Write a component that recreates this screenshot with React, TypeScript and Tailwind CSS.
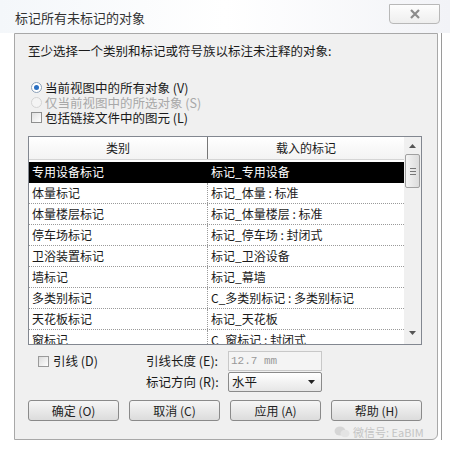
import React from 'react';

const rows: [string, string][] = [
  ['专用设备标记', '标记_专用设备'],
  ['体量标记', '标记_体量 : 标准'],
  ['体量楼层标记', '标记_体量楼层 : 标准'],
  ['停车场标记', '标记_停车场 : 封闭式'],
  ['卫浴装置标记', '标记_卫浴设备'],
  ['墙标记', '标记_幕墙'],
  ['多类别标记', 'C_多类别标记 : 多类别标记'],
  ['天花板标记', '标记_天花板'],
  ['窗标记', 'C_窗标记 : 封闭式'],
];

const font = { fontFamily: '"Noto Sans CJK SC", "Noto Sans", sans-serif' };

const Button = ({ label }: { label: string }) => (
  <button className="h-[21px] w-[91px] rounded-[3px] border border-[#8a8a8a] bg-gradient-to-b from-[#f6f6f6] to-[#dcdcdc] text-[12px] leading-none text-[#222]">
    {label}
  </button>
);

export default function App() {
  return (
    <div className="relative h-[451px] w-[450px] overflow-hidden bg-white text-[#1a1a1a]" style={font}>
      {/* 标题栏 */}
      <div className="flex h-[33px] bg-gradient-to-r from-[#f4f7fa] via-[#ffffff] to-[#f2f3f7]">
        <div className="flex-1 pl-[15px] pt-[10px] text-[13px] leading-[16px] text-[#333]">标记所有未标记的对象</div>
        <div className="mr-[10px] mt-[4px] flex h-[20px] w-[51px] items-center justify-center rounded-b-[4px] border border-[#b8b8b8] bg-gradient-to-b from-[#fdfdfd] to-[#eeeeee]">
          <svg width="12" height="10" viewBox="0 0 12 10">
            <path d="M2 1 L10 9 M10 1 L2 9" stroke="#8c8c8c" strokeWidth="2.2" fill="none" />
          </svg>
        </div>
      </div>

      <div className="flex">
        <div className="ml-[14px] h-[407px] w-[424px] rounded-br-[6px] border border-[#a8a8a8] bg-[#f0f0f0] pl-[13px] pr-[15px]">
          <div className="pt-[8px] text-[12.5px] leading-[17px]">至少选择一个类别和标记或符号族以标注未注释的对象:</div>

          {/* 选项 */}
          <div className="mt-[21px] flex flex-col pl-[3px] text-[12.5px] leading-[15px]">
            <div className="flex h-[15px] items-center gap-[3px]">
              <span className="flex h-[11px] w-[11px] items-center justify-center rounded-full border border-[#8aa0b8] bg-white">
                <span className="h-[5px] w-[5px] rounded-full bg-[#2a6fc2]" />
              </span>
              <span>当前视图中的所有对象 (V)</span>
            </div>
            <div className="flex h-[15px] items-center gap-[3px] text-[#a8a8a8]">
              <span className="h-[11px] w-[11px] rounded-full border border-[#d4d4d4] bg-[#f4f4f4]" />
              <span>仅当前视图中的所选对象 (S)</span>
            </div>
            <div className="flex h-[15px] items-center gap-[3px]">
              <span className="h-[11px] w-[11px] border border-[#8e8f8f] bg-gradient-to-br from-[#e0e0e0] to-white" />
              <span>包括链接文件中的图元 (L)</span>
            </div>
          </div>

          {/* 表格 */}
          <div className="mt-[11px] flex h-[209px] w-[394px] border border-[#828790] bg-white">
            <div className="flex-1 overflow-hidden">
              <div className="flex h-[23px] border-b border-[#d5d5d5] bg-gradient-to-b from-white to-[#f3f3f3] text-[12px]">
                <div className="flex w-[179px] items-center justify-center border-r border-[#777]">类别</div>
                <div className="flex flex-1 items-center justify-center">载入的标记</div>
              </div>
              <div className="mt-[2px]">
                {rows.map(([a, b], i) => (
                  <div
                    key={a}
                    className={`flex h-[21px] text-[12px] leading-[20px] ${i === 0 ? 'bg-black text-white' : 'border-b border-dotted border-[#9a9a9a]'}`}
                  >
                    <div className={`w-[179px] pl-[3px] ${i === 0 ? '' : 'border-r border-dotted border-[#9a9a9a]'}`}>{a}</div>
                    <div className="flex-1 pl-[3px]">{b}</div>
                  </div>
                ))}
              </div>
            </div>
            {/* 滚动条 */}
            <div className="flex w-[17px] flex-col items-center bg-[#f0f0f0] pt-[7px]">
              <svg width="7" height="4" viewBox="0 0 7 4"><path d="M0 4 L3.5 0 L7 4 Z" fill="#555" /></svg>
              <div className="mt-[6px] flex h-[34px] w-[15px] flex-col items-center justify-center gap-[2px] rounded-[2px] border border-[#a0a0a0] bg-gradient-to-r from-[#f4f4f4] to-[#dcdcdc]">
                <span className="h-px w-[6px] bg-[#777]" />
                <span className="h-px w-[6px] bg-[#777]" />
                <span className="h-px w-[6px] bg-[#777]" />
              </div>
              <div className="flex-1" />
              <svg className="mb-[9px]" width="7" height="4" viewBox="0 0 7 4"><path d="M0 0 L3.5 4 L7 0 Z" fill="#555" /></svg>
            </div>
          </div>

          {/* 引线设置 */}
          <div className="mt-[6px] flex text-[12.5px]">
            <div className="flex h-[20px] w-[118px] items-center gap-[4px] pl-[10px]">
              <span className="h-[11px] w-[11px] border border-[#9a9a9a] bg-gradient-to-br from-[#dcdcdc] to-white" />
              <span>引线 (D)</span>
            </div>
            <div className="flex flex-col gap-[1px]">
              <div className="flex h-[20px] items-center">
                <span className="w-[82px]">引线长度 (E):</span>
                <div className="flex h-[20px] w-[94px] items-center border border-[#c8c8c8] bg-[#f4f4f4] pl-[2px] text-[11px] text-[#999]" style={{ fontFamily: '"Liberation Mono", monospace' }}>
                  12.7 mm
                </div>
              </div>
              <div className="flex h-[20px] items-center">
                <span className="w-[82px]">标记方向 (R):</span>
                <div className="flex h-[20px] w-[94px] items-center justify-between rounded-[2px] border border-[#8a8a8a] bg-gradient-to-b from-white to-[#e6e6e6] pl-[3px] pr-[6px]">
                  <span>水平</span>
                  <svg width="7" height="4" viewBox="0 0 7 4"><path d="M0 0 L3.5 4 L7 0 Z" fill="#222" /></svg>
                </div>
              </div>
            </div>
          </div>

          {/* 按钮 */}
          <div className="mt-[8px] flex gap-[10px]">
            <Button label="确定 (O)" />
            <Button label="取消 (C)" />
            <Button label="应用 (A)" />
            <Button label="帮助 (H)" />
          </div>
        </div>
        <div className="ml-[3px] h-[407px] w-px bg-[#9a9a9a]" />
      </div>

      {/* 水印 */}
      <div className="absolute left-[334px] top-[424px] flex items-center gap-[3px] text-[11px] text-[#c4c4c4]">
        <svg width="16" height="12" viewBox="0 0 16 12">
          <ellipse cx="6" cy="5" rx="5.5" ry="4.5" fill="#d6d6d6" />
          <ellipse cx="11" cy="7.5" rx="4.5" ry="3.8" fill="#e4e4e4" />
        </svg>
        <span>微信号: EaBIM</span>
      </div>
    </div>
  );
}
